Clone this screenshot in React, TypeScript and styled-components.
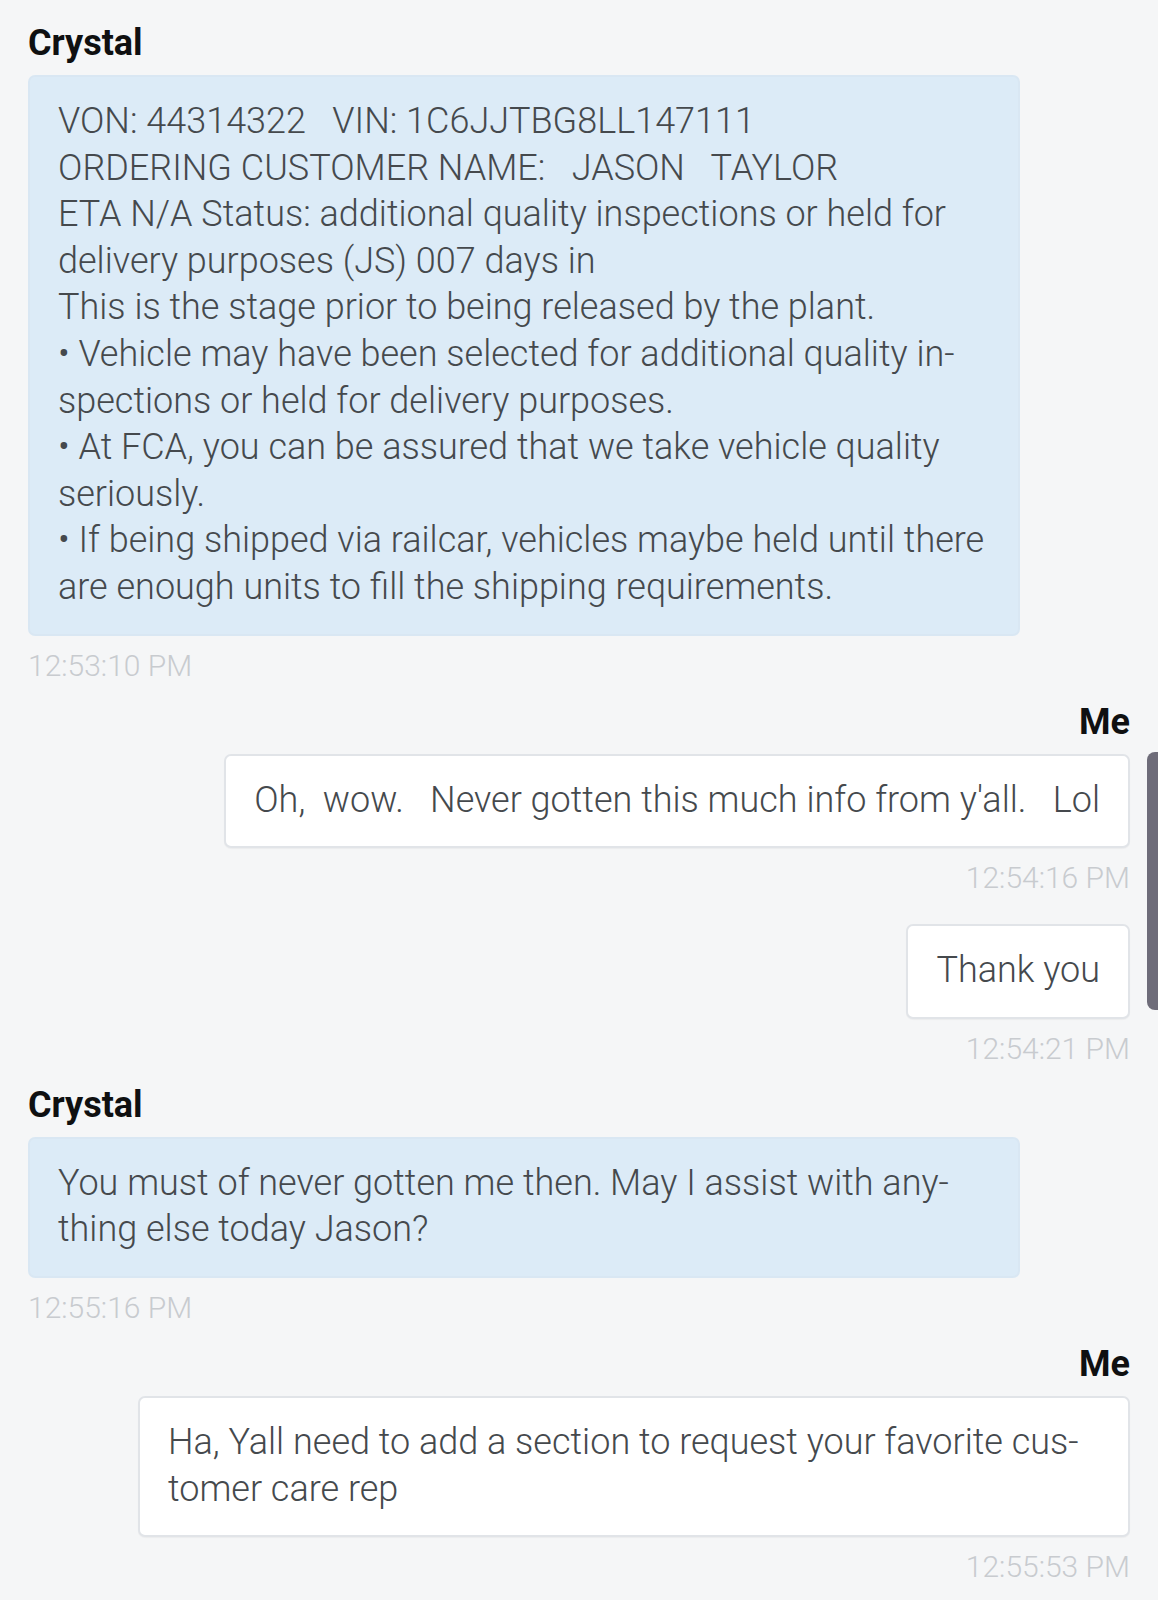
import React from 'react';
import styled, { createGlobalStyle } from 'styled-components';

const GlobalStyle = createGlobalStyle`
  html, body {
    margin: 0;
    padding: 0;
    background: #f5f6f7;
  }
  body {
    font-family: Roboto, 'Noto Sans', sans-serif;
  }
`;

const Page = styled.div`
  position: relative;
  width: 1158px;
  min-height: 1600px;
  box-sizing: border-box;
  padding: 23px 28px 0 28px;
  display: flex;
  flex-direction: column;
  overflow: hidden;
  background: #f5f6f7;
`;

const Group = styled.div<{ $mine: boolean; $gap: number }>`
  display: flex;
  flex-direction: column;
  align-items: ${p => (p.$mine ? 'flex-end' : 'flex-start')};
  margin-top: ${p => p.$gap}px;
`;

const Sender = styled.div`
  font-family: Roboto, 'Noto Sans', sans-serif;
  font-weight: 700;
  font-size: 36px;
  line-height: 40px;
  color: #0f1011;
  margin-bottom: 12px;
`;

const Bubble = styled.div<{ $mine: boolean; $wide: boolean }>`
  box-sizing: border-box;
  max-width: 992px;
  width: ${p => (p.$wide ? '992px' : 'auto')};
  padding: 21px 28px 23px 28px;
  border-radius: 7px;
  background: ${p => (p.$mine ? '#ffffff' : '#dcebf7')};
  border: 2px solid ${p => (p.$mine ? '#e1e4e8' : '#d9e7f3')};
  box-shadow: ${p => (p.$mine ? '0 1px 1px rgba(0, 0, 0, 0.04)' : 'none')};
  font-family: 'Roboto Light', Roboto, 'Noto Sans', sans-serif;
  font-weight: 300;
  font-size: 36px;
  line-height: 46.6px;
  color: #45494d;
  white-space: pre;
`;

const Time = styled.div`
  margin-top: 12px;
  font-family: 'Roboto Light', Roboto, 'Noto Sans', sans-serif;
  font-size: 30px;
  font-weight: 300;
  line-height: 36px;
  color: #c8cbcf;
`;

const ScrollThumb = styled.div`
  position: absolute;
  top: 752px;
  right: 0;
  width: 11px;
  height: 258px;
  background: #6e6c79;
  border-radius: 8px 0 0 8px;
`;

type Message = {
  from: 'Crystal' | 'Me';
  text: string;
  time: string;
  wide?: boolean;
};

const messages: Message[] = [
  {
    from: 'Crystal',
    wide: true,
    time: '12:53:10 PM',
    text:
      'VON: 44314322   VIN: 1C6JJTBG8LL147111\n' +
      'ORDERING CUSTOMER NAME:   JASON   TAYLOR\n' +
      'ETA N/A Status: additional quality inspections or held for\n' +
      'delivery purposes (JS) 007 days in\n' +
      'This is the stage prior to being released by the plant.\n' +
      '\u2022 Vehicle may have been selected for additional quality in-\n' +
      'spections or held for delivery purposes.\n' +
      '\u2022 At FCA, you can be assured that we take vehicle quality\n' +
      'seriously.\n' +
      '\u2022 If being shipped via railcar, vehicles maybe held until there\n' +
      'are enough units to fill the shipping requirements.'
  },
  {
    from: 'Me',
    time: '12:54:16 PM',
    text: "Oh,  wow.   Never gotten this much info from y'all.   Lol"
  },
  {
    from: 'Me',
    time: '12:54:21 PM',
    text: 'Thank you'
  },
  {
    from: 'Crystal',
    wide: true,
    time: '12:55:16 PM',
    text: 'You must of never gotten me then. May I assist with any-\nthing else today Jason?'
  },
  {
    from: 'Me',
    wide: true,
    time: '12:55:53 PM',
    text: 'Ha, Yall need to add a section to request your favorite cus-\ntomer care rep'
  }
];

export default function App() {
  return (
    <>
      <GlobalStyle />
      <Page>
        {messages.map((m, i) => {
          const named = i === 0 || messages[i - 1].from !== m.from;
          const mine = m.from === 'Me';
          const gap = i === 0 ? 0 : named ? 18 : 28;
          return (
            <Group key={i} $mine={mine} $gap={gap}>
              {named && <Sender>{m.from}</Sender>}
              <Bubble $mine={mine} $wide={!!m.wide}>
                {m.text}
              </Bubble>
              <Time>{m.time}</Time>
            </Group>
          );
        })}
        <ScrollThumb />
      </Page>
    </>
  );
}
